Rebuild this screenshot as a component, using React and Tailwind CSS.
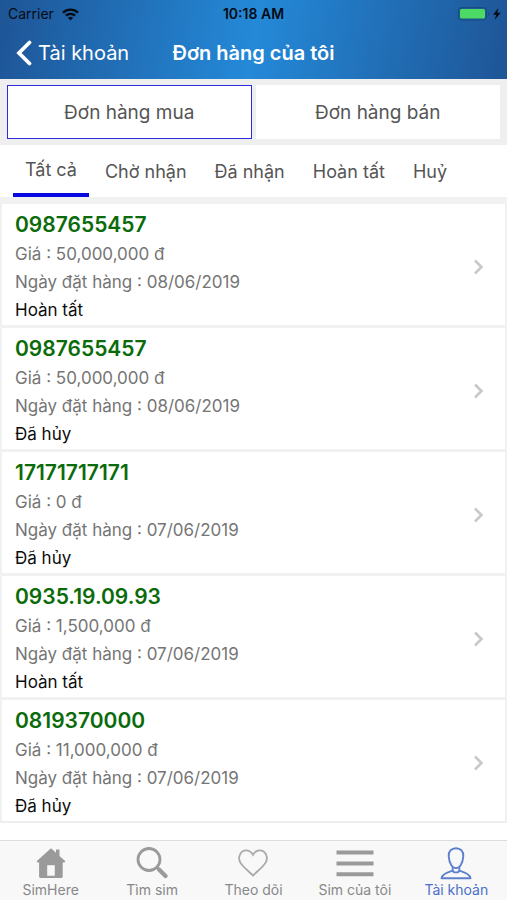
const orders = [
  { number: "0987655457", price: "50,000,000 đ", date: "08/06/2019", status: "Hoàn tất" },
  { number: "0987655457", price: "50,000,000 đ", date: "08/06/2019", status: "Đã hủy" },
  { number: "17171717171", price: "0 đ", date: "07/06/2019", status: "Đã hủy" },
  { number: "0935.19.09.93", price: "1,500,000 đ", date: "07/06/2019", status: "Hoàn tất" },
  { number: "0819370000", price: "11,000,000 đ", date: "07/06/2019", status: "Đã hủy" },
];

const filters = ["Tất cả", "Chờ nhận", "Đã nhận", "Hoàn tất", "Huỷ"];

function WifiIcon() {
  return (
    <svg width="17" height="13" viewBox="0 0 17 13" fill="none" stroke="#050b14" strokeWidth="2.4" aria-hidden="true">
      <path d="M1 4.7C5.2.6 11.8.6 16 4.7" />
      <path d="M3.9 7.7c2.6-2.5 6.6-2.5 9.2 0" />
      <path d="M8.5 12.4 5.9 9.8c1.5-1.3 3.7-1.3 5.2 0z" fill="#050b14" stroke="none" />
    </svg>
  );
}

function BatteryIcon() {
  return (
    <svg width="43" height="14" viewBox="0 0 43 14" aria-hidden="true">
      <rect x="0.5" y="0.5" width="28" height="12.5" rx="3" fill="#1d5b93" stroke="#1a4a80" />
      <rect x="2" y="2" width="25" height="9.5" rx="1.5" fill="#4cd964" />
      <path d="M30 4.7c1.6.5 1.6 3.6 0 4.1z" fill="#1a4a80" />
      <path d="M40.5 1 35 7.8h3.2l-1.5 5 6-7h-3.5z" fill="#050b14" />
    </svg>
  );
}

function HomeIcon() {
  return (
    <svg width="30" height="30" viewBox="0 0 30 30" fill="#9a9a9a" aria-hidden="true">
      <path
        fillRule="evenodd"
        d="M15 .3 20 4.8V1.5h3.5V8l5.9 5.2-1 1.2h-1.7v14c0 .9-.6 1.5-1.5 1.5H4.6c-.9 0-1.5-.6-1.5-1.5v-14H1.6l-1-1.2zM11.2 17.2v10.6h7.6V17.2z"
      />
    </svg>
  );
}

function SearchIcon() {
  return (
    <svg width="32" height="32" viewBox="0 0 32 32" fill="none" stroke="#9a9a9a" aria-hidden="true">
      <circle cx="13" cy="12.5" r="11" strokeWidth="2.8" />
      <path d="m21 20.5 2.8 2.8" strokeWidth="2.5" />
      <path d="m23 22.5 6.5 6.5" strokeWidth="4.2" strokeLinecap="round" />
    </svg>
  );
}

function HeartIcon() {
  return (
    <svg width="30" height="28" viewBox="0 0 30 28" fill="none" stroke="#aaa" strokeWidth="1.8" aria-hidden="true">
      <path d="M15 5.8C12.8 1.4 7.8.2 4.4 2.6.6 5.3.3 10 2.4 13.6 5 18 10 21.5 15 26.5 20 21.5 25 18 27.6 13.6 29.7 10 29.4 5.3 25.6 2.6 22.2.2 17.2 1.4 15 5.8z" />
    </svg>
  );
}

function MenuIcon() {
  return (
    <svg width="38" height="28" viewBox="0 0 38 28" stroke="#9a9a9a" strokeWidth="4" aria-hidden="true">
      <path d="M.5 3.5h37M.5 14.5h37M.5 25.2h37" />
    </svg>
  );
}

function PersonIcon() {
  return (
    <svg width="32" height="33" viewBox="0 0 32 33" fill="none" stroke="#5d80cd" strokeWidth="1.9" strokeLinejoin="round" aria-hidden="true">
      <path d="M16 1.2c-4.9 0-7.5 3.3-7.3 8 .2 3.2 1.1 6.7 2.8 9.3 1.2 1.8 2.7 2.8 4.5 2.8s3.3-1 4.5-2.8c1.7-2.6 2.6-6.1 2.8-9.3.2-4.7-2.4-8-7.3-8z" />
      <path d="M12.7 20v3.3C12.3 24.8 2.5 25.1 1.5 31.2h29c-1-6.100-10.800-6.400-11.200-7.900V20" />
      <path d="M12.7 23.3c.4 2.7 6.2 2.7 6.6 0" />
    </svg>
  );
}

const tabs = [
  { label: "SimHere", Icon: HomeIcon },
  { label: "Tìm sim", Icon: SearchIcon },
  { label: "Theo dõi", Icon: HeartIcon },
  { label: "Sim của tôi", Icon: MenuIcon },
  { label: "Tài khoản", Icon: PersonIcon, active: true },
];

function Header() {
  return (
    <header className="bg-[linear-gradient(100deg,#1e5596_0%,#2489d8_50%,#1e5596_100%)]">
      <div className="grid h-7 grid-cols-3 items-center px-2 text-sm text-[#050b14]">
        <div className="flex items-center gap-2">
          <span>Carrier</span>
          <WifiIcon />
        </div>
        <span className="text-center font-semibold">10:18 AM</span>
        <div className="-mr-0.5 flex justify-end">
          <BatteryIcon />
        </div>
      </div>
      <div className="grid h-[51px] grid-cols-[1fr_auto_1fr] items-center px-4 pb-0.5 text-xl text-white">
        <button type="button" className="flex items-center gap-1.5 justify-self-start whitespace-nowrap">
          <svg width="16" height="26" viewBox="0 0 16 26" fill="none" stroke="white" strokeWidth="3.8" strokeLinecap="round" aria-hidden="true">
            <path d="M13.5 2.5 3 13l10.5 10.5" />
          </svg>
          Tài khoản
        </button>
        <h1 className="font-semibold">Đơn hàng của tôi</h1>
      </div>
    </header>
  );
}

function OrderCard({ order }) {
  return (
    <li>
      <a href="#order" className="flex items-center justify-between bg-white pt-1.5 pr-[21px] pb-px pl-[13px]">
        <div className="text-[17px] leading-7 text-[#757575]">
          <h2 className="text-[21px] leading-[30px] font-semibold text-[#0b6b0b]">{order.number}</h2>
          <p>Giá : {order.price}</p>
          <p>Ngày đặt hàng : {order.date}</p>
          <p className="text-[#0c0c0c]">{order.status}</p>
        </div>
        <svg width="11" height="16" viewBox="0 0 11 16" fill="none" stroke="#c7c7cc" strokeWidth="2.5" aria-hidden="true">
          <path d="m2 1.5 6.5 6.5L2 14.5" />
        </svg>
      </a>
    </li>
  );
}

export default function App() {
  return (
    <div className="flex min-h-screen flex-col bg-white font-['Inter','Noto_Sans',sans-serif]">
      <Header />
      <div className="grid grid-cols-2 gap-1 bg-[#efeff0] px-[7px] py-1.5 text-[19px] text-[#555]">
        <button type="button" aria-pressed="true" className="h-[54px] border border-[#2c2ce0] bg-white pt-0.5">
          Đơn hàng mua
        </button>
        <button type="button" aria-pressed="false" className="h-[54px] bg-white pt-0.5">
          Đơn hàng bán
        </button>
      </div>
      <nav className="flex h-[52px] gap-1 px-[13px] text-lg text-[#555]">
        {filters.map((name, i) => (
          <button
            key={name}
            type="button"
            className={
              i === 0
                ? "border-b-4 border-[#0808e0] px-3 pt-0.5 whitespace-nowrap"
                : "px-3 pt-0.5 whitespace-nowrap"
            }
          >
            {name}
          </button>
        ))}
      </nav>
      <main className="flex-1">
        <ul className="flex flex-col gap-[3px] border-b-2 border-[#eee] bg-[#f1f1f2] px-0.5 pt-[7px]">
          {orders.map((order, i) => (
            <OrderCard key={i} order={order} />
          ))}
        </ul>
      </main>
      <nav className="sticky bottom-0 grid h-[60px] grid-cols-5 border-t border-[#dcdcdc] bg-[#f8f8f8] text-sm">
        {tabs.map(({ label, Icon, active }) => (
          <a
            key={label}
            href="#tab"
            className={
              active
                ? "flex flex-col items-center whitespace-nowrap text-[#4a70c8]"
                : "flex flex-col items-center whitespace-nowrap text-[#888]"
            }
          >
            <span className="flex h-10 items-center pt-1">
              <Icon />
            </span>
            <span className="leading-[18px]">{label}</span>
          </a>
        ))}
      </nav>
    </div>
  );
}
